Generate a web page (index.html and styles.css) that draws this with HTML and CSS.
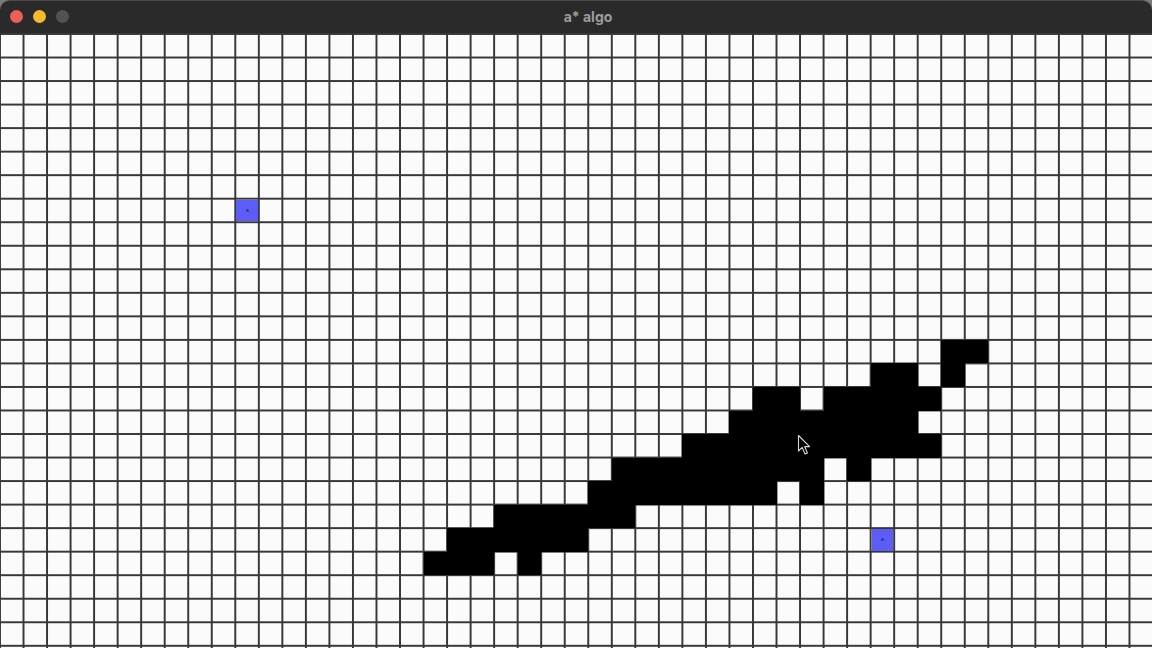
FILE: index.html
```html
<!DOCTYPE html>
<html>
<head>
<meta charset="utf-8">
<title>a* algo</title>
<link rel="stylesheet" href="styles.css">
</head>
<body>
<div class="window">
  <header class="titlebar">
    <div class="lights">
      <span class="light red"></span>
      <span class="light yellow"></span>
      <span class="light gray"></span>
    </div>
    <div class="title">a* algo</div>
  </header>
  <main class="board">
    <div class="cell wall" style="grid-area: 14 / 41 / span 1 / span 2"></div>
    <div class="cell wall" style="grid-area: 15 / 38 / span 1 / span 2"></div>
    <div class="cell wall" style="grid-area: 15 / 41 / span 1 / span 1"></div>
    <div class="cell wall" style="grid-area: 16 / 33 / span 1 / span 2"></div>
    <div class="cell wall" style="grid-area: 16 / 36 / span 1 / span 5"></div>
    <div class="cell wall" style="grid-area: 17 / 32 / span 1 / span 8"></div>
    <div class="cell wall" style="grid-area: 18 / 30 / span 1 / span 11"></div>
    <div class="cell wall" style="grid-area: 19 / 27 / span 1 / span 9"></div>
    <div class="cell wall" style="grid-area: 19 / 37 / span 1 / span 1"></div>
    <div class="cell wall" style="grid-area: 20 / 26 / span 1 / span 8"></div>
    <div class="cell wall" style="grid-area: 20 / 35 / span 1 / span 1"></div>
    <div class="cell wall" style="grid-area: 21 / 22 / span 1 / span 6"></div>
    <div class="cell wall" style="grid-area: 22 / 20 / span 1 / span 6"></div>
    <div class="cell wall" style="grid-area: 23 / 19 / span 1 / span 3"></div>
    <div class="cell wall" style="grid-area: 23 / 23 / span 1 / span 1"></div>
    <div class="cell node" style="grid-area: 8 / 11 / span 1 / span 1"><span class="dot"></span></div>
    <div class="cell node" style="grid-area: 22 / 38 / span 1 / span 1"><span class="dot"></span></div>
    <svg class="cursor" width="14" height="22" viewBox="0 0 14 22" aria-hidden="true">
      <path d="M1.5 1.5 L1.5 17 L5.2 13.4 L8 20 L10.4 19 L7.7 12.6 L12.6 12.6 Z" fill="#000" stroke="#d8d8d8" stroke-width="1.1" stroke-linejoin="round"/>
    </svg>
  </main>
</div>
</body>
</html>
```

FILE: styles.css
```css
* { box-sizing: border-box; }
html, body {
  margin: 0;
  padding: 0;
  width: 1152px;
  height: 648px;
  overflow: hidden;
  background: #7a7a7a;
  font-family: "Inter", "Liberation Sans", Arial, sans-serif;
}
.window {
  width: 1152px;
  height: 648px;
  display: flex;
  flex-direction: column;
}
.titlebar {
  height: 33px;
  flex: none;
  background: #2a2a2a;
  border-top: 1px solid #4a4a4a;
  border-radius: 10px 10px 0 0;
  display: flex;
  align-items: center;
  position: relative;
}
.lights {
  display: flex;
  gap: 10px;
  padding-left: 10px;
  margin-top: -1px;
}
.light {
  width: 13px;
  height: 13px;
  border-radius: 50%;
  display: block;
}
.red { background: #ec5f58; }
.yellow { background: #f4bb2f; }
.gray { background: #535353; }
.title {
  position: absolute;
  left: 0;
  right: 0;
  top: 0;
  bottom: 0;
  display: flex;
  align-items: center;
  justify-content: center;
  padding-left: 24px;
  color: #9c9c9c;
  font-weight: 700;
  font-size: 14px;
  margin-top: -1px;
}
.board {
  flex: 1;
  position: relative;
  overflow: hidden;
  background-color: #fbfbfb;
  background-image:
    linear-gradient(to right, #383838 2px, transparent 2px),
    linear-gradient(to bottom, #383838 2px, transparent 2px);
  background-size: 23.54px 23.54px;
  background-position: -1px 0px;
  display: grid;
  grid-template-columns: repeat(49, 23.54px);
  grid-template-rows: repeat(27, 23.54px);
}
.cell.wall {
  background: #000;
  margin: 1px 0 -1px 0;
}
.cell.node {
  background: #5c5cf6;
  margin: 2px 1px 0 1px;
  display: flex;
  align-items: center;
  justify-content: center;
}
.dot {
  width: 3px;
  height: 3px;
  border-radius: 50%;
  background: #3a3a8a;
}
.cursor {
  position: absolute;
  left: 797px;
  top: 401px;
}
```
